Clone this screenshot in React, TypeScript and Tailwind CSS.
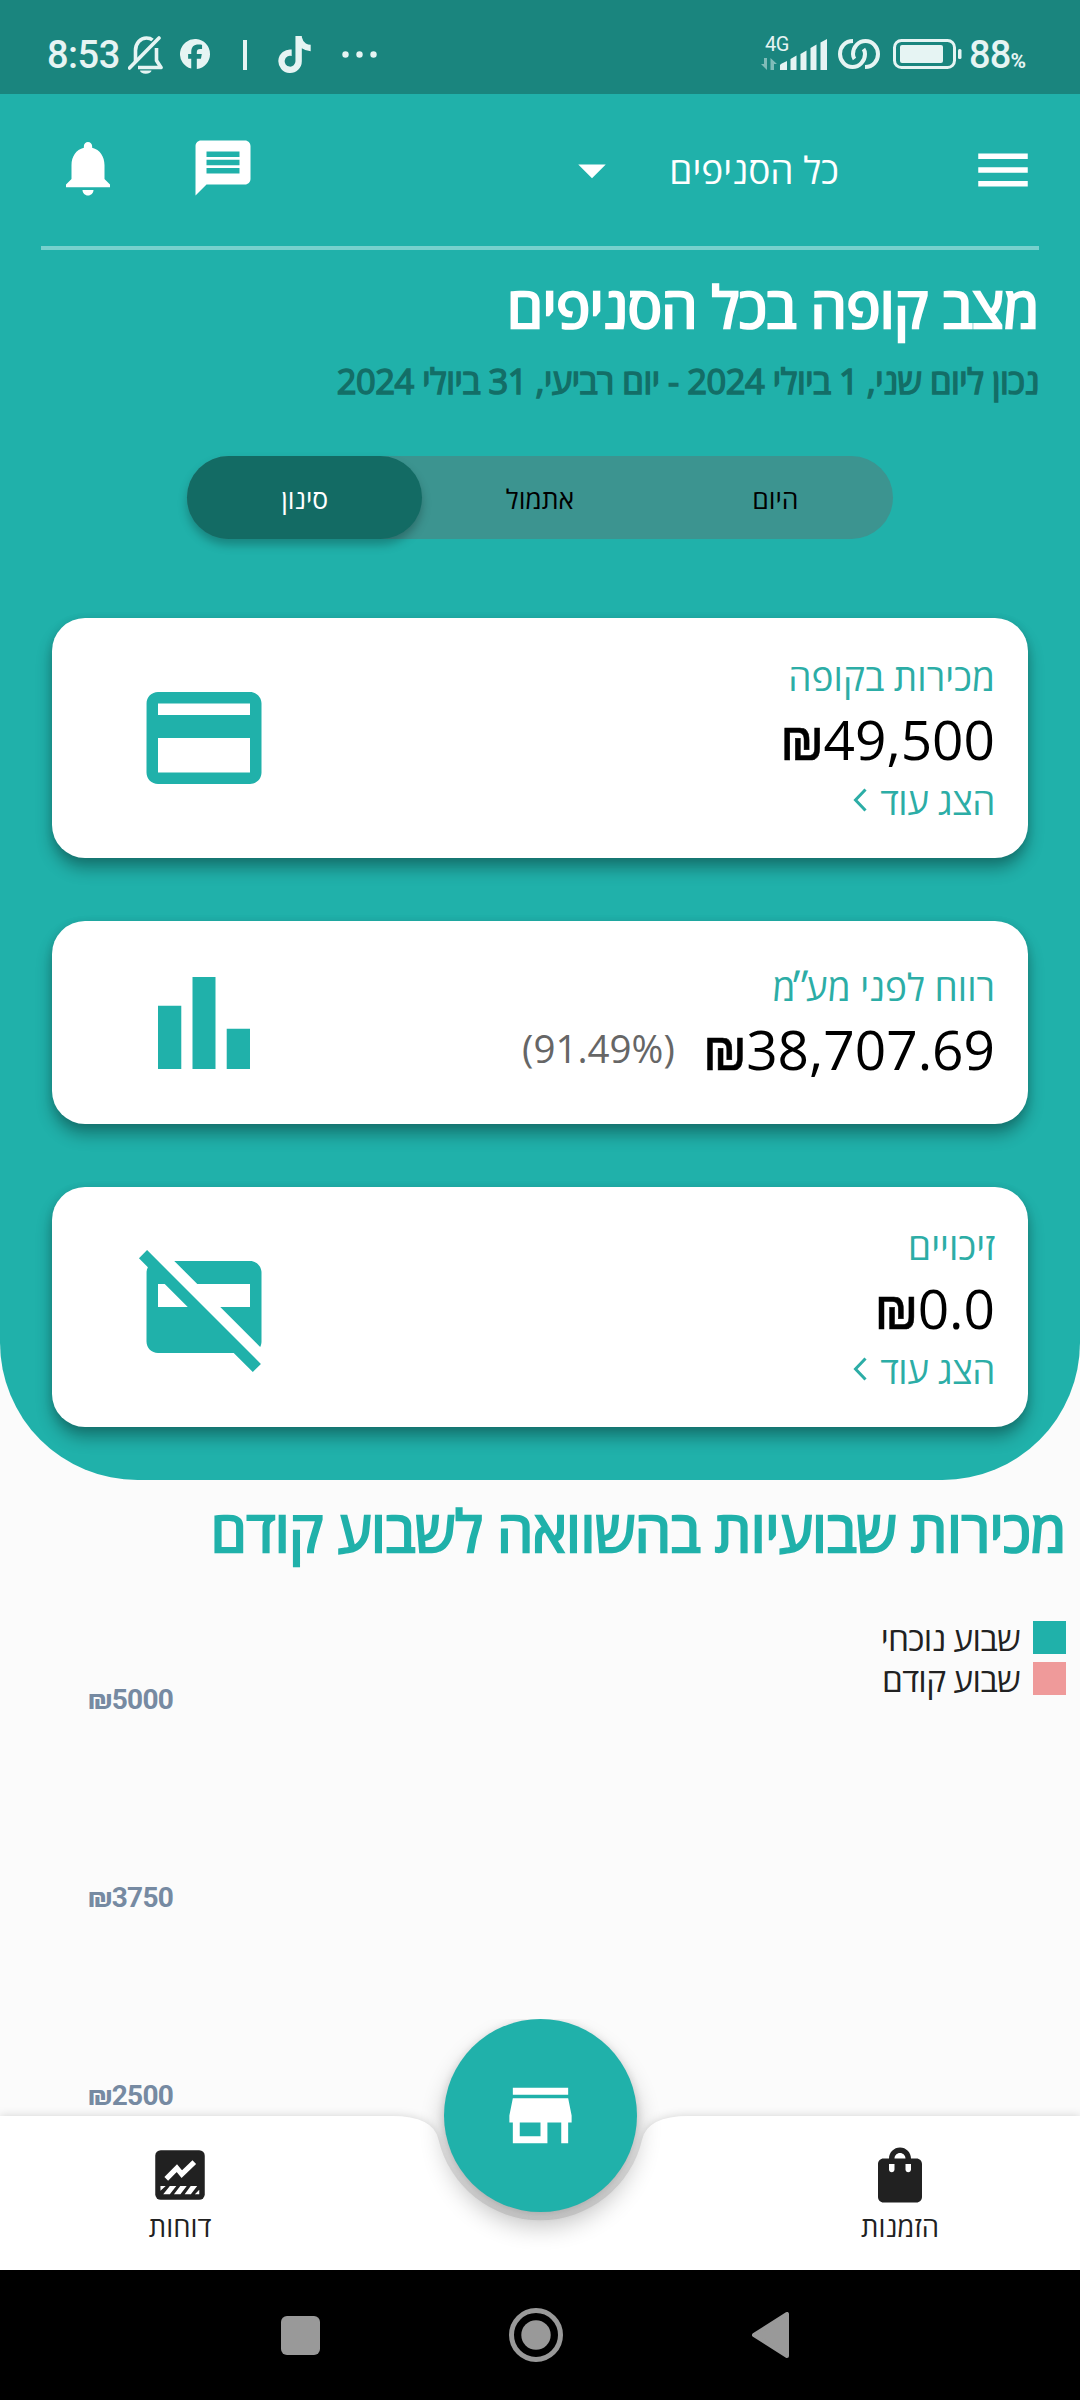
import type { ReactNode } from "react";
import {
  MdArrowDropDown,
  MdMenu,
  MdShoppingBag,
} from "react-icons/md";
import { FaTiktok } from "react-icons/fa";

function StatusBar() {
  return (
    <div dir="ltr" className="flex h-[94px] items-start bg-[#1a857e] font-[Roboto] text-[#e6f4f3]">
      <div className="ml-[47px] mt-[31px] w-[79px] text-[38px] font-medium leading-[48px] tracking-[-0.5px]">8:53</div>
      <svg className="ml-[2px] mt-[36px] h-[38px] w-[35px]" viewBox="0 0 35 38" fill="none">
        <path d="M7.5 26V14.5C7.5 7 12.5 2 18.5 2c2.600 0 4.600.7 6 2" stroke="currentColor" strokeWidth="3.600" />
        <path d="M28.500 12v12.500L33 31.500H10" stroke="currentColor" strokeWidth="3.600" strokeLinejoin="round" />
        <path d="M1.500 32L31 2" stroke="currentColor" strokeWidth="3.600" strokeLinecap="round" />
        <path d="M12 34.500h11.500a5.600 3.200 0 0 1-11.500 0z" fill="currentColor" />
      </svg>
      <svg className="ml-[17px] mt-[39px] h-[30px] w-[30px]" viewBox="0 0 24 24" fill="currentColor">
        <path d="M24 12a12 12 0 1 0-15 11.650V15.800H6.500V12H9V10.400c0-4.200 1.900-6.100 6-6.100.8 0 2.100.15 2.650.3v3.400c-.3 0-.8-.05-1.400-.05-2 0-2.800.75-2.800 2.750V12h4l-.7 3.800h-3.300V24A12 12 0 0 0 24 12z" />
      </svg>
      <div className="ml-[33px] mt-[40px] h-[30px] w-[4px] bg-current" />
      <FaTiktok className="ml-[31px] mt-[36px] h-[37px] w-[33px]" />
      <svg className="ml-[31px] mt-[51px] h-[7px] w-[35px]" viewBox="0 0 35 7" fill="currentColor">
        <circle cx="3.500" cy="3.500" r="3.200" />
        <circle cx="17.500" cy="3.500" r="3.200" />
        <circle cx="31.500" cy="3.500" r="3.200" />
      </svg>
      <div className="ml-auto mt-[34px] flex h-[38px] w-[67px] items-end">
        <div className="flex w-[19px] flex-col">
          <span className="ml-[4px] text-[20px] leading-[21px] tracking-[-0.5px]">4G</span>
          <svg className="mb-[2px] mt-[3px] h-[12px] w-[16px]" viewBox="0 0 16 12" fill="currentColor" opacity="0.5">
            <path d="M3 0h3v12L0 6h3zM9.500 12V0L16 6h-3v6z" />
          </svg>
        </div>
        <svg className="mb-[1px] h-[32px] w-[48px] shrink-0" viewBox="0 0 48 32" fill="currentColor">
          <path d="M0 26q0-1 7-4v9H0zM10.500 20l6-3.500V31h-6zM20.500 15l6-3.500V31h-6zM30.500 9l6-3.500V31h-6zM40.500 3.500L47 0v31h-6.500z" />
        </svg>
      </div>
      <svg className="ml-[10px] mt-[39px] h-[30px] w-[42px]" viewBox="0 0 42 30" fill="none" stroke="currentColor" strokeWidth="4">
        <path d="M15 2C7 2 2 8 2 15s5.500 13 12.500 13S27 22 27 15c0-2-.6-3.700-1.500-5" />
        <path d="M27 28c8 0 13-6 13-13S34.500 2 27.500 2 15 8 15 15c0 2 .6 3.700 1.500 5" />
      </svg>
      <svg className="ml-[13px] mt-[39px] h-[30px] w-[69px]" viewBox="0 0 69 30" fill="none">
        <rect x="1.500" y="1.500" width="60" height="27" rx="7" stroke="currentColor" strokeWidth="3" />
        <rect x="7" y="6" width="43" height="18" rx="2" fill="currentColor" />
        <rect x="65" y="10" width="3.500" height="10" rx="1.500" fill="currentColor" />
      </svg>
      <div className="ml-[7px] mt-[31px] flex w-[111px] items-baseline leading-[48px]">
        <span className="text-[38px] font-medium tracking-[-0.800px]">88</span>
        <span className="text-[21px] font-bold">%</span>
      </div>
    </div>
  );
}

function TopBar() {
  return (
    <div className="flex h-[152px] items-center pl-[55px] pr-[44px] text-white">
      <MdMenu className="h-[66px] w-[66px]" />
      <div className="mr-[131px] mt-[-1px] w-[170px] whitespace-nowrap text-[37px] leading-[54px]">כל הסניפים</div>
      <MdArrowDropDown className="mr-[44px] h-[66px] w-[66px]" />
      <svg className="mb-[4px] mr-auto h-[66px] w-[66px]" viewBox="0 0 24 24" fill="currentColor">
        <path d="M20 2H4c-1.100 0-1.990.9-1.990 2L2 22l4-4h14c1.100 0 2-.9 2-2V4c0-1.100-.9-2-2-2zm-2 12H6v-2h12v2zm0-3H6V9h12v2zm0-3H6V6h12v2z" />
      </svg>
      <svg className="mb-[4px] mr-[69px] h-[66px] w-[66px]" viewBox="0 0 24 24" fill="currentColor">
        <path d="M12 22c1.100 0 2-.9 2-2h-4c0 1.100.9 2 2 2zm6-6v-5c0-3.070-1.640-5.640-4.500-6.320V4c0-.83-.67-1.500-1.500-1.500s-1.500.67-1.500 1.500v.68C7.630 5.360 6 7.920 6 11v5l-2 2v1h16v-1l-2-2z" />
      </svg>
    </div>
  );
}

function Filter() {
  return (
    <div className="mx-[187px] mt-[51px] flex h-[83px] rounded-full bg-[#3c9490] text-center text-[26.500px] leading-[87px] text-black">
      <div className="flex-1">היום</div>
      <div className="flex-1">אתמול</div>
      <div className="flex-1 rounded-full bg-[#136b64] text-white shadow-[0_6px_10px_rgba(0,0,0,0.25)]">סינון</div>
    </div>
  );
}

function More() {
  return (
    <div className="mb-[1px] flex text-[36.800px] leading-[50px] tracking-[-0.400px] text-[#2cada6]">
      <span>הצג עוד</span>
      <svg className="mr-[13px] mt-[12px] h-[24px] w-[14px]" viewBox="0 0 14 24" fill="none" stroke="currentColor" strokeWidth="3">
        <path d="M12.500 1.500L2.500 12l10 10.500" />
      </svg>
    </div>
  );
}

function Card({ label, amount, note, more, tall, children }: { label: ReactNode; amount: string; note?: string; more?: boolean; tall: boolean; children: ReactNode }) {
  return (
    <div
      className={
        (tall ? "h-[240px]" : "h-[203px]") +
        " flex items-center justify-between rounded-[33px] bg-white pl-[83px] pr-[33px] shadow-[0_11px_16px_rgba(0,0,0,0.3),0_2px_8px_rgba(0,0,0,0.12)]"
      }
    >
      <div>
        <div className="text-[37px] leading-[56px] text-[#2cada6]">{label}</div>
        <div className="-mt-[3px] mb-[1px] flex h-[73px] items-center leading-[73px]">
          <span dir="ltr" className="text-[55px] text-black">
            <span className="inline-block origin-[50%_84%] scale-y-[1.12] font-[Roboto] leading-none [-webkit-text-stroke:0.500px_currentColor]">₪</span>
            {amount}
          </span>
          {note && <span dir="ltr" className="mr-[29px] text-[38.500px] text-[#666]">{note}</span>}
        </div>
        {more && <More />}
      </div>
      <svg className="h-[138px] w-[138px] text-[#20b1aa]" viewBox="0 0 24 24" fill="currentColor">
        {children}
      </svg>
    </div>
  );
}

function Legend({ text, swatch }: { text: string; swatch: string }) {
  return (
    <div className="flex h-[41px] items-start">
      <div className={"h-[33px] w-[33px] " + swatch} />
      <div className="mr-[13px] text-[33.500px] leading-[35px] tracking-[-0.700px] text-[#212121]">{text}</div>
    </div>
  );
}

function AxisLabel({ text }: { text: string }) {
  return (
    <div dir="ltr" className="h-[198px] pl-[88px] font-[Roboto] text-[28px] font-bold leading-[32px] tracking-[-0.700px] text-[#768aa2]">{text}</div>
  );
}

function BottomNav() {
  return (
    <div className="absolute left-0 top-[2019px] h-[251px] w-[1080px] overflow-hidden">
      <svg className="absolute inset-0 h-[251px] w-[1080px] drop-shadow-[0_0_5px_rgba(0,0,0,0.16)]" viewBox="0 0 1080 251">
        <path d="M-20 97H391.800Q433.100 97 438.500 120.400A104.500 104.500 0 0 0 642.100 120.400Q647.500 97 688.800 97H1100V280H-20z" fill="#fff" />
      </svg>
      <div className="absolute left-[444px] top-0 flex h-[193px] w-[193px] items-center justify-center rounded-full bg-[#20b1aa] text-white shadow-[0_14px_24px_rgba(0,0,0,0.24),0_2px_8px_rgba(0,0,0,0.14)]">
        <svg className="h-[83px] w-[83px]" viewBox="0 0 24 24" fill="currentColor">
          <path d="M20 4H4v2h16V4zm1 10v-2l-1-5H4l-1 5v2h1v6h10v-6h4v6h2v-6h1zm-9 4H6v-4h6v4z" />
        </svg>
      </div>
      <div className="relative flex justify-between pt-[123px] text-[27.500px] leading-[38px] text-[#212121]">
        <div className="flex w-[360px] flex-col items-center">
          <MdShoppingBag className="h-[66px] w-[66px]" />
          <span>הזמנות</span>
        </div>
        <div className="flex w-[360px] flex-col items-center">
          <svg className="h-[66px] w-[66px]" viewBox="0 0 24 24">
            <rect x="3" y="3" width="18" height="18" rx="2" fill="#212121" />
            <path d="M7 13.400L10.850 9.500l1.800 2.200L17.200 7.300" fill="none" stroke="#fff" strokeWidth="1.900" />
            <path d="M4.900 16H6.800L4.900 17.700zM8.300 16h2.350L8.300 19H5.900zM12.100 16h2.350l-2.300 3H9.800zM15.900 16h2.350l-2.300 3H13.700zM19 17.400V19h-1.600z" fill="#fff" />
          </svg>
          <span>דוחות</span>
        </div>
      </div>
    </div>
  );
}

function SystemNav() {
  return (
    <div dir="ltr" className="absolute left-0 top-[2270px] flex h-[130px] w-[1080px] items-center bg-black">
      <div className="ml-[281px] h-[39px] w-[39px] rounded-[6px] bg-[#999]" />
      <svg className="ml-[189px] h-[54px] w-[54px]" viewBox="0 0 54 54">
        <circle cx="27" cy="27" r="24.500" fill="none" stroke="#999" strokeWidth="5" />
        <circle cx="27" cy="27" r="14.700" fill="#999" />
      </svg>
      <svg className="ml-[189px] h-[46px] w-[37px]" viewBox="0 0 37 46">
        <path d="M2 23L35 2V44z" fill="#999" stroke="#999" strokeWidth="4" strokeLinejoin="round" />
      </svg>
    </div>
  );
}

export default function App() {
  return (
    <div dir="rtl" className="relative h-[2400px] w-[1080px] overflow-hidden bg-[#fbfbfb] font-['Open_Sans','Noto_Sans',sans-serif]">
      <div className="h-[1479.500px] rounded-b-[137.500px] bg-[#20b1aa]">
        <StatusBar />
        <TopBar />
        <div className="mx-[41px] h-[4px] bg-[#77d1cd]" />
        <h1 className="mr-[41px] mt-[20px] text-[57px] leading-[72px] tracking-[-0.200px] text-white [-webkit-text-stroke:2.600px_currentColor]">מצב קופה בכל הסניפים</h1>
        <div className="mr-[41px] mt-[15px] text-[34.500px] leading-[48px] tracking-[-0.460px] text-[#136e67] [-webkit-text-stroke:1.500px_currentColor]">
          נכון ליום שני, 1 ביולי 2024 - יום רביעי, 31 ביולי 2024
        </div>
        <Filter />
        <div className="mx-[52px] mt-[79px] flex flex-col gap-[63px]">
          <Card tall more label="מכירות בקופה" amount="49,500">
            <path d="M20 4H4c-1.110 0-1.990.89-1.990 2L2 18c0 1.110.89 2 2 2h16c1.110 0 2-.89 2-2V6c0-1.110-.89-2-2-2zm0 14H4v-6h16v6zm0-10H4V6h16v2z" />
          </Card>
          <Card tall={false} label={<>רווח לפני מע<span className="-mx-[6px]">״</span>מ</>} amount="38,707.69" note="(91.49%)">
            <path d="M4 9h4.050v11H4zM10 4h4v16h-4zM15.950 13H20v7h-4.050z" />
          </Card>
          <Card tall more label="זיכויים" amount="0.0">
            <path d="M6.830 4H20c1.110 0 2 .89 2 2v12c0 .34-.08.66-.23.94L14.830 12H20V8h-9.170l-4-4zm13.660 19.310L17.170 20H4c-1.110 0-2-.89-2-2L2.010 6c0-.34.08-.66.23-.93L.69 3.510 2.100 2.100l19.800 19.800-1.410 1.410zM4 12h5.170l-4-4H4v4z" />
          </Card>
        </div>
      </div>
      <h2 className="mr-[14px] mt-[14px] text-[57px] leading-[72px] tracking-[-0.150px] text-[#20b1aa] [-webkit-text-stroke:2.400px_currentColor]">מכירות שבועיות בהשוואה לשבוע קודם</h2>
      <div className="mr-[14px] mt-[55px]">
        <Legend text="שבוע נוכחי" swatch="bg-[#20b1aa]" />
        <Legend text="שבוע קודם" swatch="bg-[#ef9a9a]" />
      </div>
      <div className="-mt-[19px]">
        <AxisLabel text="₪5000" />
        <AxisLabel text="₪3750" />
        <AxisLabel text="₪2500" />
      </div>
      <BottomNav />
      <SystemNav />
    </div>
  );
}
